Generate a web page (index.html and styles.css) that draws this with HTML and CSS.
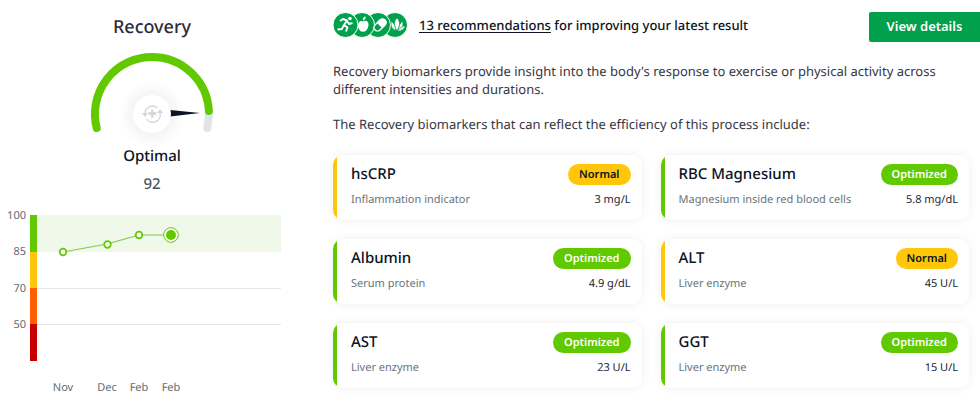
FILE: index.html
```html
<!DOCTYPE html>
<html lang="en">
<head>
    <meta charset="UTF-8">
    <meta name="viewport" content="width=device-width, initial-scale=1">
    <title>Recovery</title>
    <link rel="stylesheet" href="styles.css">
</head>
<body>
<div class="page">
    <aside class="score">
        <h1>Recovery</h1>
        <svg class="gauge" width="160" height="88" viewBox="0 0 160 88" aria-hidden="true">
            <defs>
                <radialGradient id="glow">
                    <stop offset="0.5" stop-color="#000" stop-opacity="0.05"/>
                    <stop offset="1" stop-color="#000" stop-opacity="0"/>
                </radialGradient>
            </defs>
            <path d="M137 69 L135.300 82" stroke="#e2e3e6" stroke-width="8" stroke-linecap="round" fill="none"/>
            <path d="M24.700 82 A57 57 0 0 1 80 11 A57 57 0 0 1 136.900 65" stroke="#61c900" stroke-width="8" stroke-linecap="round" fill="none"/>
            <circle cx="80" cy="68" r="33" fill="url(#glow)"/>
            <path d="M98 64 L128 67 L98 70.500 Z" fill="#0b1324"/>
            <circle cx="80" cy="68" r="19" fill="#fff"/>
            <g fill="none" stroke="#d3d5d8" stroke-width="1.300">
                <path d="M73 67 A7.500 7.500 0 0 1 85.500 62"/>
                <path d="M74.500 73 A7.500 7.500 0 0 0 88 67"/>
                <path d="M80.300 63.500 V71.500 M76.300 67.500 H84.300" stroke-width="2.400"/>
            </g>
            <path d="M70 67 H76 L73 71 Z M85 67 L88 63 L91 67 Z" fill="#d3d5d8"/>
        </svg>
        <p class="rating">Optimal</p>
        <p class="points">92</p>
        <svg class="chart" width="284" height="190" viewBox="0 0 284 190" role="img" aria-label="Recovery score history">
            <rect x="37" y="7" width="244" height="37" fill="#eff8e9"/>
            <path d="M37 80.500 H281 M37 116.500 H281" stroke="#e6e6e8"/>
            <rect x="30" y="7" width="7" height="37" fill="#61c900"/>
            <rect x="30" y="44" width="7" height="36" fill="#ffc60a"/>
            <rect x="30" y="80" width="7" height="37" fill="#ff5f00"/>
            <rect x="30" y="116" width="7" height="37" fill="#c80000"/>
            <g class="axis" text-anchor="end">
                <text x="26" y="11">100</text>
                <text x="26" y="47">85</text>
                <text x="26" y="84">70</text>
                <text x="26" y="120">50</text>
            </g>
            <polyline points="63,44 107,36 139,27 171,27" fill="none" stroke="#7fcb4c" stroke-width="1.200"/>
            <g fill="#fff" stroke="#61c900" stroke-width="1.700">
                <circle cx="63" cy="44" r="3.300"/>
                <circle cx="107.500" cy="36.500" r="3.300"/>
                <circle cx="139" cy="27" r="3.300"/>
                <circle cx="171" cy="27" r="7.300" stroke-width="1"/>
            </g>
            <circle cx="171" cy="27" r="5" fill="#61c900"/>
            <g class="axis" text-anchor="middle">
                <text x="63" y="183">Nov</text>
                <text x="107" y="183">Dec</text>
                <text x="139" y="183">Feb</text>
                <text x="171" y="183">Feb</text>
            </g>
        </svg>
    </aside>

    <main class="details">
        <header class="topbar">
            <svg class="topics" width="76" height="26" viewBox="0 0 76 26" aria-hidden="true">
                <g fill="#00a04c" stroke="#fff">
                    <circle cx="62" cy="13" r="12.500"/>
                    <circle cx="45" cy="13" r="12.500"/>
                    <circle cx="29" cy="13" r="12.500"/>
                    <circle cx="12.500" cy="13" r="12.500"/>
                </g>
                <!-- runner -->
                <circle cx="17" cy="6.500" r="1.800" fill="#fff"/>
                <path d="M7 9 L10 7 L14 8.500 L11 13 L14.500 15.500 L13 19.500 M14 9 L16 12 L19.500 11 M10.500 13.500 L9 17 L4.500 17.500" fill="none" stroke="#fff" stroke-width="1.900" stroke-linejoin="round"/>
                <!-- apple -->
                <path d="M30 9.500 C33 7.500 35.500 9.500 35.500 12.500 C35.500 16 33 20.500 30 19.500 C28 20.500 25 17.500 25 13 C25.500 9 28 8.500 30 9.500 Z M30 8.500 C29.500 6 31 4.500 32.500 4.500 C33 6.500 32 8 30 8.500 Z" fill="#fff"/>
                <!-- pill -->
                <g transform="rotate(-45 47 13)" stroke="#fff" stroke-width="1.300">
                    <rect x="40" y="9.500" width="14" height="7" rx="3.500" fill="#00a04c"/>
                    <path d="M47 9.500 H50.500 A3.500 3.500 0 0 1 50.500 16.500 H47 Z" fill="#fff"/>
                </g>
                <!-- lotus -->
                <path d="M64 18.500 C60.500 14 61 9 64 6 C67 9 67.500 14 64 18.500 Z M63 18.500 C58.500 17 57.500 13 58.500 9.500 C61 11 62 14 63 18.500 Z M65 18.500 C69.500 17 70.500 13 69.500 9.500 C67 11 66 14 65 18.500 Z M64 19 C67 19.500 71 18 72 14 C69 14 66 16 64 19 Z" fill="#fff" stroke="#00a04c" stroke-width="0.500"/>
            </svg>
            <p class="summary"><a href="#">13 recommendations</a> for improving your latest result</p>
            <button type="button" class="btn">View details</button>
        </header>

        <div class="intro">
            <p>Recovery biomarkers provide insight into the body's response to exercise or physical activity across different intensities and durations.</p>
            <p>The Recovery biomarkers that can reflect the efficiency of this process include:</p>
        </div>

        <section class="cards">
            <article class="card normal">
                <h2>hsCRP</h2>
                <span class="badge">Normal</span>
                <p class="desc">Inflammation indicator</p>
                <p class="value">3 mg/L</p>
            </article>
            <article class="card optimized">
                <h2>RBC Magnesium</h2>
                <span class="badge">Optimized</span>
                <p class="desc">Magnesium inside red blood cells</p>
                <p class="value">5.8 mg/dL</p>
            </article>
            <article class="card optimized">
                <h2>Albumin</h2>
                <span class="badge">Optimized</span>
                <p class="desc">Serum protein</p>
                <p class="value">4.9 g/dL</p>
            </article>
            <article class="card normal">
                <h2>ALT</h2>
                <span class="badge">Normal</span>
                <p class="desc">Liver enzyme</p>
                <p class="value">45 U/L</p>
            </article>
            <article class="card optimized">
                <h2>AST</h2>
                <span class="badge">Optimized</span>
                <p class="desc">Liver enzyme</p>
                <p class="value">23 U/L</p>
            </article>
            <article class="card optimized">
                <h2>GGT</h2>
                <span class="badge">Optimized</span>
                <p class="desc">Liver enzyme</p>
                <p class="value">15 U/L</p>
            </article>
        </section>
    </main>
</div>
</body>
</html>
```
FILE: styles.css
```css
* {
    box-sizing: border-box;
}

body {
    margin: 0;
    font-family: "Noto Sans", "Open Sans", sans-serif;
    text-rendering: geometricPrecision;
    background: white;
    color: #0b1324;
}

h1, h2, p {
    margin: 0;
    font-weight: 400;
}

.page {
    display: flex;
}

.score {
    flex: 0 0 304px;
    display: flex;
    flex-direction: column;
    align-items: center;
    padding-top: 15px;
}

.score h1 {
    font-size: 18px;
    line-height: 24px;
    font-weight: 500;
    color: #2b2b3b;
}

.gauge {
    margin-top: 7px;
    overflow: visible;
}

.rating {
    margin-top: 11px;
    font-size: 15px;
    line-height: 22px;
    font-weight: 500;
}

.points {
    margin-top: 7px;
    font-size: 15px;
    line-height: 20px;
    font-weight: 500;
    color: #4a5560;
}

.chart {
    align-self: flex-start;
    margin-top: 14px;
}

.axis {
    font-size: 11px;
    fill: #626b74;
}

.details {
    flex: 1;
    min-width: 0;
    padding: 12px 0 24px 29px;
}

.topbar {
    display: flex;
    align-items: flex-start;
}

.summary {
    margin-left: 10px;
    font-size: 13px;
    line-height: 26px;
    font-weight: 500;
}

.summary a {
    color: inherit;
    text-underline-offset: 2px;
}

.btn {
    width: 111px;
    height: 30px;
    margin-left: auto;
    padding: 0 0 2px;
    border: none;
    border-radius: 2px 0 0 2px;
    background: #00a04c;
    color: white;
    font-family: inherit;
    font-size: 13px;
    font-weight: 600;
    cursor: pointer;
}

.intro {
    margin-top: 20px;
    padding-right: 11px;
    font-size: 13px;
    line-height: 18px;
    color: #363644;
}

.intro p + p {
    margin-top: 17px;
}

.cards {
    display: grid;
    grid-template-columns: 1fr 1fr;
    gap: 19px;
    margin-top: 22px;
    padding-right: 11px;
}

.card {
    display: grid;
    grid-template-columns: 1fr auto;
    align-items: center;
    row-gap: 5px;
    padding: 9px 11px 10px 18px;
    border-radius: 10px;
    background: linear-gradient(to right, var(--level) 4px, white 4px);
    box-shadow: 0 0 10px rgba(0, 0, 0, 0.07);
}

.card h2 {
    font-size: 15px;
    line-height: 21px;
    font-weight: 500;
}

.badge {
    justify-self: end;
    padding: 0 11px;
    border-radius: 11px;
    background: var(--level);
    font-size: 11px;
    line-height: 21px;
    font-weight: 600;
}

.desc, .value {
    font-size: 11px;
    line-height: 20px;
}

.desc {
    color: #68737b;
}

.value {
    text-align: right;
    color: #1d2735;
}

.normal {
    --level: #ffc60a;
}

.optimized {
    --level: #61c900;
}

.optimized .badge {
    color: white;
}
```
